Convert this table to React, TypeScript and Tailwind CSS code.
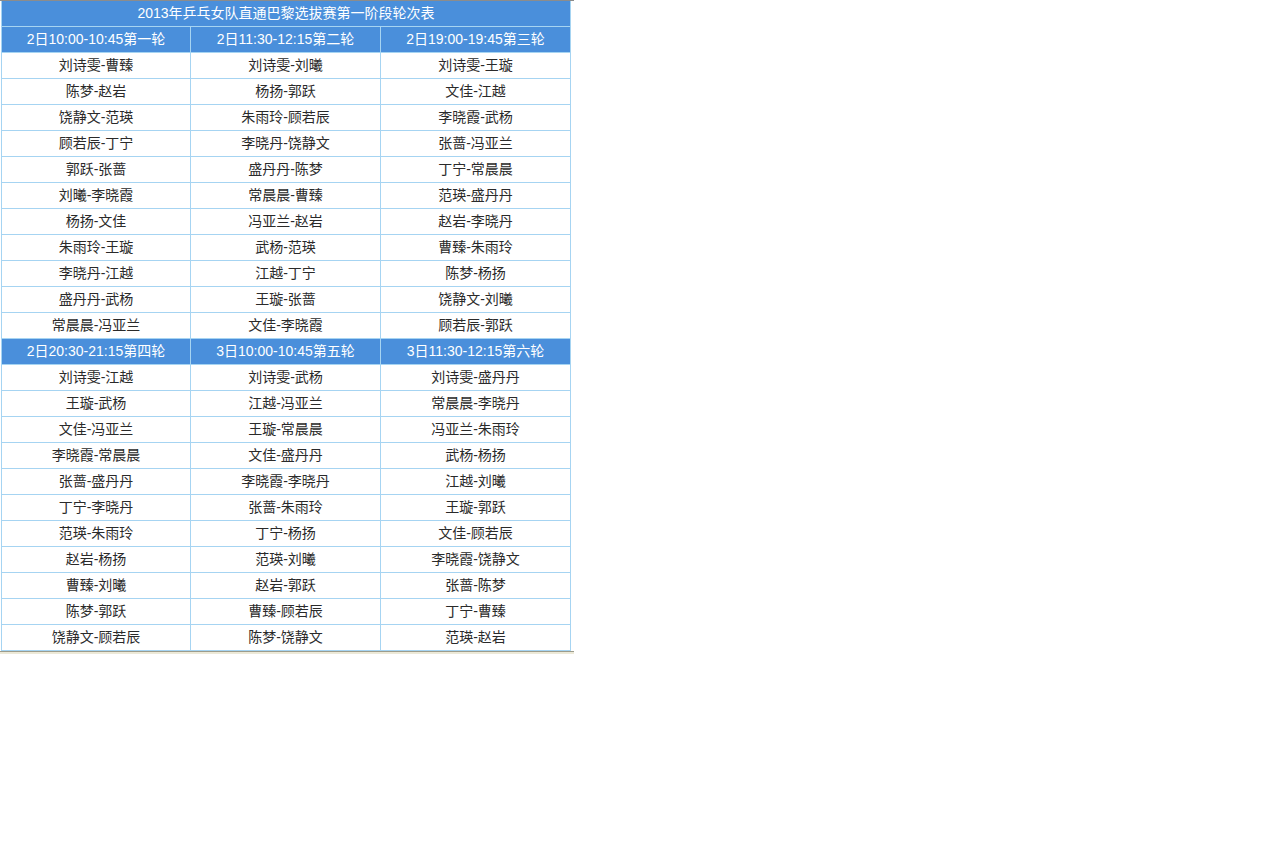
import React from "react";

const rounds1 = ["2日10:00-10:45第一轮", "2日11:30-12:15第二轮", "2日19:00-19:45第三轮"];
const rounds2 = ["2日20:30-21:15第四轮", "3日10:00-10:45第五轮", "3日11:30-12:15第六轮"];

const matches1 = [
  ["刘诗雯-曹臻", "刘诗雯-刘曦", "刘诗雯-王璇"],
  ["陈梦-赵岩", "杨扬-郭跃", "文佳-江越"],
  ["饶静文-范瑛", "朱雨玲-顾若辰", "李晓霞-武杨"],
  ["顾若辰-丁宁", "李晓丹-饶静文", "张蔷-冯亚兰"],
  ["郭跃-张蔷", "盛丹丹-陈梦", "丁宁-常晨晨"],
  ["刘曦-李晓霞", "常晨晨-曹臻", "范瑛-盛丹丹"],
  ["杨扬-文佳", "冯亚兰-赵岩", "赵岩-李晓丹"],
  ["朱雨玲-王璇", "武杨-范瑛", "曹臻-朱雨玲"],
  ["李晓丹-江越", "江越-丁宁", "陈梦-杨扬"],
  ["盛丹丹-武杨", "王璇-张蔷", "饶静文-刘曦"],
  ["常晨晨-冯亚兰", "文佳-李晓霞", "顾若辰-郭跃"],
];

const matches2 = [
  ["刘诗雯-江越", "刘诗雯-武杨", "刘诗雯-盛丹丹"],
  ["王璇-武杨", "江越-冯亚兰", "常晨晨-李晓丹"],
  ["文佳-冯亚兰", "王璇-常晨晨", "冯亚兰-朱雨玲"],
  ["李晓霞-常晨晨", "文佳-盛丹丹", "武杨-杨扬"],
  ["张蔷-盛丹丹", "李晓霞-李晓丹", "江越-刘曦"],
  ["丁宁-李晓丹", "张蔷-朱雨玲", "王璇-郭跃"],
  ["范瑛-朱雨玲", "丁宁-杨扬", "文佳-顾若辰"],
  ["赵岩-杨扬", "范瑛-刘曦", "李晓霞-饶静文"],
  ["曹臻-刘曦", "赵岩-郭跃", "张蔷-陈梦"],
  ["陈梦-郭跃", "曹臻-顾若辰", "丁宁-曹臻"],
  ["饶静文-顾若辰", "陈梦-饶静文", "范瑛-赵岩"],
];

function HeaderRow({ cells }: { cells: string[] }) {
  return (
    <tr>
      {cells.map((c) => (
        <td
          key={c}
          className="h-[26px] border border-[#a6d4f2] bg-[#4a8fdb] p-0 text-center align-middle text-[14px] leading-none text-white"
        >
          {c}
        </td>
      ))}
    </tr>
  );
}

function MatchRows({ rows }: { rows: string[][] }) {
  return (
    <>
      {rows.map((row, i) => (
        <tr key={i}>
          {row.map((m, j) => (
            <td
              key={j}
              className="h-[26px] border border-[#a6d4f2] bg-white p-0 text-center align-middle text-[14px] leading-none text-[#2a2a2a]"
            >
              {m}
            </td>
          ))}
        </tr>
      ))}
    </>
  );
}

export default function App() {
  return (
    <div
      className="min-h-[855px] bg-white"
      style={{ fontFamily: '"Liberation Sans", "Noto Sans CJK SC", sans-serif' }}
    >
      <div className="w-[574px] border-t border-[#8c8c8c]">
        <table className="ml-px w-[570px] table-fixed border-collapse">
          <colgroup>
            <col className="w-[189px]" />
            <col className="w-[190px]" />
            <col className="w-[190px]" />
          </colgroup>
          <tbody>
            <tr>
              <td
                colSpan={3}
                className="h-[25px] border border-t-0 border-[#a6d4f2] bg-[#4a8fdb] p-0 text-center align-middle text-[14px] leading-none text-white"
              >
                2013年乒乓女队直通巴黎选拔赛第一阶段轮次表
              </td>
            </tr>
            <HeaderRow cells={rounds1} />
            <MatchRows rows={matches1} />
            <HeaderRow cells={rounds2} />
            <MatchRows rows={matches2} />
          </tbody>
        </table>
        <div className="h-px bg-[#9c9c8c]" />
        <div className="h-[2px] bg-[#ece9d8]" />
      </div>
    </div>
  );
}
